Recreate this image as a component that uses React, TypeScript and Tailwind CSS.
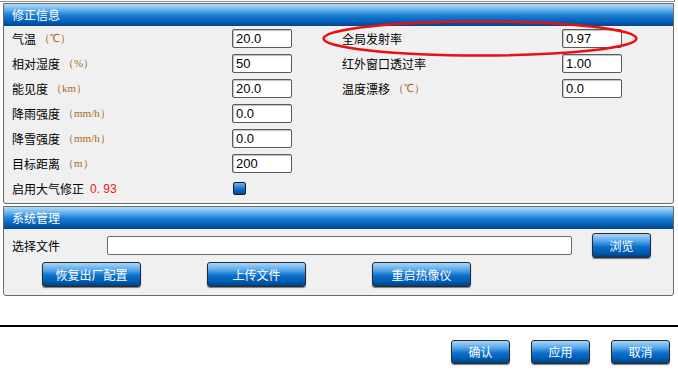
import React from 'react';

const font = { fontFamily: '"Noto Sans CJK SC", "Liberation Sans", sans-serif' };

const headerCls =
  'h-[22px] flex items-center pl-[8px] text-white text-[12px] bg-[linear-gradient(to_bottom,#b4dcf8_0%,#6ab4ee_25%,#1f7fd6_50%,#0664bc_75%,#00478e_100%)]';

const btnCls =
  'flex items-center justify-center text-white text-[12px] rounded-[3px] border border-[#2a2a2a] shadow-[0_1px_1px_rgba(0,0,0,0.5)] bg-[linear-gradient(to_bottom,#a8d6f8_0%,#5aa8ea_30%,#0c6fcb_55%,#005cb0_80%,#003f80_100%)]';

const Unit = ({ text }: { text: string }) => (
  <span className="text-[11px] text-[#a8681a] ml-[3px] font-['Liberation_Serif',serif]">{text}</span>
);

const Field = ({ value }: { value: string }) => (
  <div className="w-[60px] h-[19px] bg-white border border-[#5a5a5a] rounded-[2px] shadow-[inset_1px_1px_1px_rgba(0,0,0,0.25)] text-[13px] leading-[17px] pl-[3px] text-black font-['Liberation_Sans',sans-serif]">
    {value}
  </div>
);

type Item = { label: string; unit?: string; value: string };

const left: Item[] = [
  { label: '气温', unit: '（℃）', value: '20.0' },
  { label: '相对湿度', unit: '（%）', value: '50' },
  { label: '能见度', unit: '（km）', value: '20.0' },
  { label: '降雨强度', unit: '（mm/h）', value: '0.0' },
  { label: '降雪强度', unit: '（mm/h）', value: '0.0' },
  { label: '目标距离', unit: '（m）', value: '200' },
];

const right: Item[] = [
  { label: '全局发射率', value: '0.97' },
  { label: '红外窗口透过率', value: '1.00' },
  { label: '温度漂移', unit: '（℃）', value: '0.0' },
];

const Cell = ({ item }: { item?: Item }) => {
  if (!item) return <div className="w-[280px]" />;
  return (
    <div className="flex items-center w-[280px]">
      <div className="w-[220px] flex items-center text-[12px] text-black">
        {item.label}
        {item.unit && <Unit text={item.unit} />}
      </div>
      <Field value={item.value} />
    </div>
  );
};

export default function App() {
  return (
    <div className="w-[678px] h-[374px] bg-white relative overflow-hidden" style={font}>
      <div className="h-[2px] w-[675px] border-b border-r border-[#8a8a8a]" />

      {/* 修正信息 */}
      <div className="ml-[3px] mt-[1px] w-[671px] border border-[#6a6a6a] rounded-b-[3px] bg-[#f0f0f0] pb-[2px]">
        <div className={headerCls}>修正信息</div>
        {left.map((item, i) => (
          <div key={item.label} className="h-[25px] flex items-center pl-[8px]">
            <div className="w-[330px]">
              <Cell item={item} />
            </div>
            <Cell item={right[i]} />
          </div>
        ))}
        <div className="h-[25px] flex items-center pl-[8px]">
          <div className="w-[220px] flex items-center text-[12px] text-black">
            启用大气修正
            <span className="ml-[6px] text-[12px] text-[#f01818] font-['Liberation_Sans',sans-serif]">0. 93</span>
          </div>
          <div className="w-[13px] h-[13px] ml-[1px] rounded-[2px] border border-[#1a1a1a] bg-[linear-gradient(to_bottom,#6ab4ee,#0a6acb_60%,#004a96)]" />
        </div>
      </div>

      {/* 系统管理 */}
      <div className="ml-[3px] mt-[2px] w-[671px] border border-[#6a6a6a] rounded-b-[3px] bg-[#f0f0f0] pb-[8px]">
        <div className={headerCls}>系统管理</div>
        <div className="h-[33px] flex items-center pl-[8px]">
          <div className="w-[95px] text-[12px] text-black">选择文件</div>
          <div className="w-[465px] h-[19px] bg-white border border-[#6a6a6a] rounded-[2px]" />
          <button className={`${btnCls} ml-[20px] w-[59px] h-[25px]`}>浏览</button>
        </div>
        <div className="flex items-center pl-[38px] gap-[66px]">
          <button className={`${btnCls} w-[99px] h-[25px]`}>恢复出厂配置</button>
          <button className={`${btnCls} w-[99px] h-[25px]`}>上传文件</button>
          <button className={`${btnCls} w-[99px] h-[25px]`}>重启热像仪</button>
        </div>
      </div>

      <div className="mt-[29px] h-[2px] bg-black" />

      <div className="flex justify-end gap-[21px] pr-[8px] mt-[13px]">
        <button className={`${btnCls} w-[59px] h-[24px]`}>确认</button>
        <button className={`${btnCls} w-[59px] h-[24px]`}>应用</button>
        <button className={`${btnCls} w-[59px] h-[24px]`}>取消</button>
      </div>

      <svg className="absolute left-[321px] top-[19px]" width="318" height="39" viewBox="0 0 318 39">
        <ellipse cx="159" cy="19.5" rx="156.5" ry="17" fill="none" stroke="#e81010" strokeWidth="2.5" />
      </svg>
    </div>
  );
}
